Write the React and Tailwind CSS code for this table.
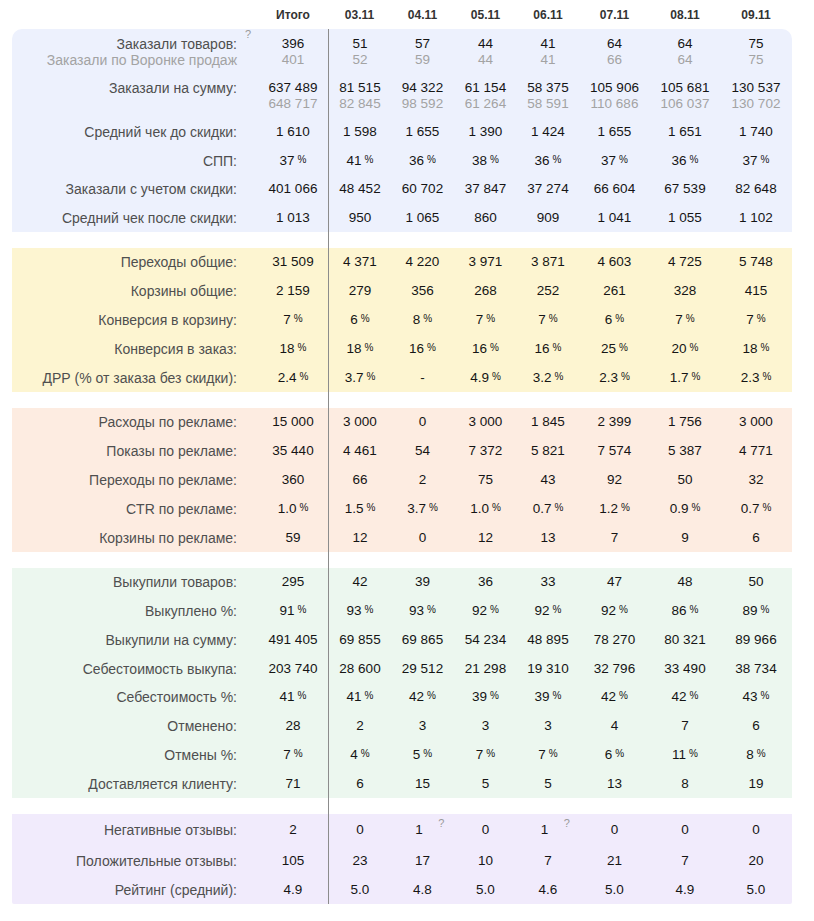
import React from "react";

const COLS = "grid w-[780px] grid-cols-[246px_70px_63px_63px_63px_62px_71px_70px_72px]";

function P({ v }) {
  return (
    <span className="whitespace-nowrap">
      {v}
      <span className="ml-[3px] text-[10px] align-[2px] leading-none">%</span>
    </span>
  );
}

function Q({ v }) {
  return (
    <span className="relative mr-[7px] mb-[6px]">
      {v}
      <span className="absolute left-[23px] -top-[4px] text-[11px] leading-none text-[#9a9a9a]">?</span>
    </span>
  );
}

function Cell({ children, idx }) {
  return (
    <div
      className={
        "flex flex-col items-center justify-center leading-[16px] " +
        (idx === 1 ? "border-l border-[#8c8c8c]" : "")
      }
    >
      {children}
    </div>
  );
}

function Row({ label, sub, q, values, subs, h, pct }) {
  return (
    <div className={COLS} style={{ height: h }}>
      <div className="relative flex flex-col items-end justify-center pr-[21px] text-[14px] leading-[16px] text-[#4f4f4f]">
        <span className="whitespace-nowrap">{label}</span>
        {sub ? (
          <span className="whitespace-nowrap text-[#a3a3a3]">{sub}</span>
        ) : subs ? (
          <span className="whitespace-nowrap">&nbsp;</span>
        ) : null}
        {q && (
          <span className="absolute left-[233px] top-[0px] text-[11px] leading-none text-[#9a9a9a]">?</span>
        )}
      </div>
      {values.map((v, i) => (
        <Cell key={i} idx={i}>
          <span className="whitespace-nowrap text-[#151515]">
            {pct && v !== "-" ? <P v={v} /> : typeof v === "object" && v.q ? <Q v={v.q} /> : v}
          </span>
          {subs && <span className="whitespace-nowrap text-[#a3a3a3]">{subs[i]}</span>}
        </Cell>
      ))}
    </div>
  );
}

function Gap({ h }) {
  return (
    <div className={COLS + " bg-white"} style={{ height: h }}>
      <div />
      <div />
      <div className="border-l border-[#8c8c8c]" />
    </div>
  );
}

export default function App() {
  const dates = ["Итого", "03.11", "04.11", "05.11", "06.11", "07.11", "08.11", "09.11"];
  return (
    <div className="min-h-[921px] w-[814px] bg-white pl-[12px] font-['Liberation_Sans',Arial,sans-serif] text-[13.5px]">
      <div className={COLS + " h-[29px]"}>
        <div />
        {dates.map((d) => (
          <div key={d} className="flex items-center justify-center text-[12px] font-bold text-[#333]">
            {d}
          </div>
        ))}
      </div>

      <div className="w-[780px] rounded-t-[10px] bg-[#edf1fd]">
        <Row
          h="45px"
          label="Заказали товаров:"
          sub="Заказали по Воронке продаж"
          q
          values={["396", "51", "57", "44", "41", "64", "64", "75"]}
          subs={["401", "52", "59", "44", "41", "66", "64", "75"]}
        />
        <Row
          h="44px"
          label="Заказали на сумму:"
          values={["637 489", "81 515", "94 322", "61 154", "58 375", "105 906", "105 681", "130 537"]}
          subs={["648 717", "82 845", "98 592", "61 264", "58 591", "110 686", "106 037", "130 702"]}
        />
        <Row h="28.5px" label="Средний чек до скидки:" values={["1 610", "1 598", "1 655", "1 390", "1 424", "1 655", "1 651", "1 740"]} />
        <Row h="28.5px" pct label="СПП:" values={["37", "41", "36", "38", "36", "37", "36", "37"]} />
        <Row h="28.5px" label="Заказали с учетом скидки:" values={["401 066", "48 452", "60 702", "37 847", "37 274", "66 604", "67 539", "82 648"]} />
        <Row h="28.5px" label="Средний чек после скидки:" values={["1 013", "950", "1 065", "860", "909", "1 041", "1 055", "1 102"]} />
      </div>

      <Gap h="16px" />

      <div className="w-[780px] bg-[#fdf5d1]">
        <Row h="28.9px" label="Переходы общие:" values={["31 509", "4 371", "4 220", "3 971", "3 871", "4 603", "4 725", "5 748"]} />
        <Row h="28.9px" label="Корзины общие:" values={["2 159", "279", "356", "268", "252", "261", "328", "415"]} />
        <Row h="28.9px" pct label="Конверсия в корзину:" values={["7", "6", "8", "7", "7", "6", "7", "7"]} />
        <Row h="28.9px" pct label="Конверсия в заказ:" values={["18", "18", "16", "16", "16", "25", "20", "18"]} />
        <Row h="28.9px" pct label="ДРР (% от заказа без скидки):" values={["2.4", "3.7", "-", "4.9", "3.2", "2.3", "1.7", "2.3"]} />
      </div>

      <Gap h="15.5px" />

      <div className="w-[780px] bg-[#fdece1]">
        <Row h="28.9px" label="Расходы по рекламе:" values={["15 000", "3 000", "0", "3 000", "1 845", "2 399", "1 756", "3 000"]} />
        <Row h="28.9px" label="Показы по рекламе:" values={["35 440", "4 461", "54", "7 372", "5 821", "7 574", "5 387", "4 771"]} />
        <Row h="28.9px" label="Переходы по рекламе:" values={["360", "66", "2", "75", "43", "92", "50", "32"]} />
        <Row h="28.9px" pct label="CTR по рекламе:" values={["1.0", "1.5", "3.7", "1.0", "0.7", "1.2", "0.9", "0.7"]} />
        <Row h="28.9px" label="Корзины по рекламе:" values={["59", "12", "0", "12", "13", "7", "9", "6"]} />
      </div>

      <Gap h="15.5px" />

      <div className="w-[780px] bg-[#ecf7ef]">
        <Row h="28.75px" label="Выкупили товаров:" values={["295", "42", "39", "36", "33", "47", "48", "50"]} />
        <Row h="28.75px" pct label="Выкуплено %:" values={["91", "93", "93", "92", "92", "92", "86", "89"]} />
        <Row h="28.75px" label="Выкупили на сумму:" values={["491 405", "69 855", "69 865", "54 234", "48 895", "78 270", "80 321", "89 966"]} />
        <Row h="28.75px" label="Себестоимость выкупа:" values={["203 740", "28 600", "29 512", "21 298", "19 310", "32 796", "33 490", "38 734"]} />
        <Row h="28.75px" pct label="Себестоимость %:" values={["41", "41", "42", "39", "39", "42", "42", "43"]} />
        <Row h="28.75px" label="Отменено:" values={["28", "2", "3", "3", "3", "4", "7", "6"]} />
        <Row h="28.75px" pct label="Отмены %:" values={["7", "4", "5", "7", "7", "6", "11", "8"]} />
        <Row h="28.75px" label="Доставляется клиенту:" values={["71", "6", "15", "5", "5", "13", "8", "19"]} />
      </div>

      <Gap h="16.5px" />

      <div className="w-[780px] rounded-b-[2px] bg-[#f1ebfc]">
        <Row h="32px" label="Негативные отзывы:" values={["2", "0", { q: "1" }, "0", { q: "1" }, "0", "0", "0"]} />
        <Row h="29px" label="Положительные отзывы:" values={["105", "23", "17", "10", "7", "21", "7", "20"]} />
        <Row h="28.5px" label="Рейтинг (средний):" values={["4.9", "5.0", "4.8", "5.0", "4.6", "5.0", "4.9", "5.0"]} />
      </div>
    </div>
  );
}
